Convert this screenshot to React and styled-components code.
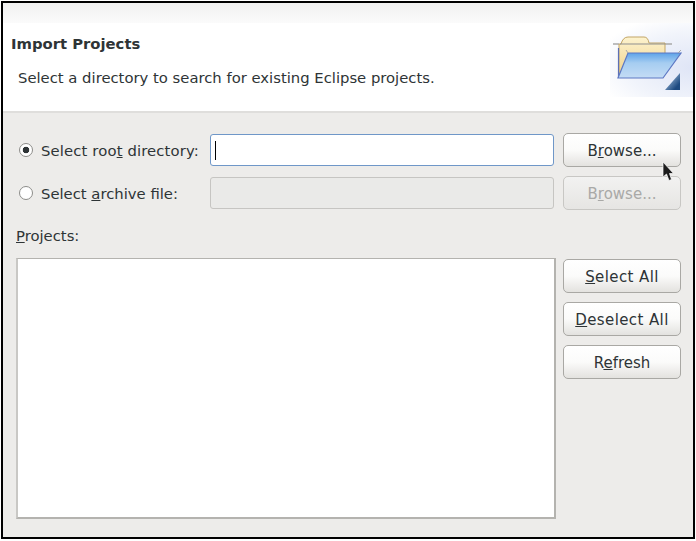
import styled, { createGlobalStyle } from 'styled-components';

const GlobalStyle = createGlobalStyle`
    html, body {
        margin: 0;
        padding: 0;
        background: #fff;
    }
`;

export default function App() {
    return (
        <>
            <GlobalStyle />
            <Frame>
                <TopBand />
                <Banner>
                    <BannerText>
                        <Title>Import Projects</Title>
                        <Subtitle>Select a directory to search for existing Eclipse projects.</Subtitle>
                    </BannerText>
                    <BannerArt>
                        <FolderIcon />
                    </BannerArt>
                </Banner>
                <Body>
                    <SourceGrid>
                        <RadioLabel $spread>
                            <Radio $checked />
                            <span>Select roo<Key>t</Key> directory:</span>
                        </RadioLabel>
                        <PathInput $focused><Caret /></PathInput>
                        <BrowseSlot>
                            <Button>B<Key>r</Key>owse...</Button>
                            <Pointer />
                        </BrowseSlot>
                        <RadioLabel>
                            <Radio />
                            <span>Select <Key>a</Key>rchive file:</span>
                        </RadioLabel>
                        <PathInput $disabled />
                        <Button disabled>B<Key>r</Key>owse...</Button>
                    </SourceGrid>
                    <ProjectsLabel><Key>P</Key>rojects:</ProjectsLabel>
                    <ProjectsRow>
                        <ProjectList />
                        <ButtonColumn>
                            <Button $wide><Key>S</Key>elect All</Button>
                            <Button $wide><Key>D</Key>eselect All</Button>
                            <Button>R<Key>e</Key>fresh</Button>
                        </ButtonColumn>
                    </ProjectsRow>
                </Body>
            </Frame>
        </>
    );
}

function FolderIcon() {
    return (
        <svg width="72" height="56" viewBox="0 0 72 56">
            <defs>
                <linearGradient id="back" x1="0" y1="0" x2="0" y2="1">
                    <stop offset="0" stopColor="#fdf3cf" />
                    <stop offset="1" stopColor="#efcf85" />
                </linearGradient>
                <linearGradient id="front" x1="0" y1="0" x2="0" y2="1">
                    <stop offset="0" stopColor="#5ea3e8" />
                    <stop offset="0.4" stopColor="#a6cdf1" />
                    <stop offset="1" stopColor="#c4dcf5" />
                </linearGradient>
                <linearGradient id="corner" x1="0" y1="0" x2="1" y2="1">
                    <stop offset="0.2" stopColor="#9bb7d6" />
                    <stop offset="0.8" stopColor="#1d4a80" />
                </linearGradient>
            </defs>
            <path d="M1 8 H7 M52 8 H60" stroke="#a9a9a9" strokeWidth="1.5" />
            <path d="M7 42 V8 H9 Q11 1 16 1 H32 Q36 1 37 7 H53 V20 H20 Z" fill="url(#back)" stroke="#c2a566" strokeWidth="1" />
            <path d="M8 8 H53" stroke="#8f8f8f" strokeWidth="1" />
            <path d="M6.5 12 V42" stroke="#5c6fb5" strokeWidth="1.2" />
            <path d="M16 17 H69 L51 42 H6 Z" fill="url(#front)" stroke="#5d78c4" strokeWidth="1.2" />
            <path d="M66 17 L69 14 M16 17 L14 14" stroke="#a8a8a8" strokeWidth="1" />
            <path d="M68 37 V54 H53 Z" fill="url(#corner)" />
        </svg>
    );
}

function Pointer() {
    return (
        <PointerSvg width="14" height="22" viewBox="0 0 14 22">
            <path d="M1 1 V16 L4.5 13 L7 19.5 L9.5 18.5 L7.5 12.5 H11.5 Z" fill="#1c1c1c" stroke="#fff" strokeWidth="0.7" />
        </PointerSvg>
    );
}

const Frame = styled.div`
    box-sizing: border-box;
    width: 694px;
    height: 538px;
    margin: 1px 0 0 1px;
    border: 2px solid #000;
    background-color: #edecea;
    color: #2e3436;
    font-family: "DejaVu Sans", sans-serif;
    font-size: 14.8px;
    overflow: hidden;
    display: flex;
    flex-direction: column;
`;
const TopBand = styled.div`
    height: 20px;
    flex: none;
    background: linear-gradient(#f1f1f0, #fbfbfb);
`;
const Banner = styled.div`
    box-sizing: border-box;
    height: 90px;
    flex: none;
    display: flex;
    justify-content: space-between;
    align-items: flex-start;
    background-color: #fff;
    border-bottom: 2px solid #dfdedc;
`;
const BannerText = styled.div`
    padding: 12px 0 0 8px;
`;
const Title = styled.div`
    font-weight: bold;
    line-height: 17px;
`;
const Subtitle = styled.div`
    margin: 17px 0 0 7px;
    line-height: 17px;
`;
const BannerArt = styled.div`
    box-sizing: border-box;
    width: 83px;
    height: 74px;
    padding: 13px 0 0 2px;
    background: radial-gradient(ellipse at 100% 60%, #dfe5f6 0%, #f1f4fb 55%, #fff 85%);
`;
const Body = styled.div`
    flex: 1;
    padding: 20px 12px 0 13px;
`;
const SourceGrid = styled.div`
    display: grid;
    grid-template-columns: 186px 345px 118px;
    column-gap: 8px;
    row-gap: 9px;
    align-items: center;
`;
const RadioLabel = styled.label`
    display: flex;
    align-items: center;
    gap: 8px;
    padding-left: 3px;
    white-space: nowrap;
    letter-spacing: ${({ $spread }) => ($spread ? '0.14px' : '0')};
`;
const Radio = styled.span`
    box-sizing: border-box;
    flex: none;
    width: 14px;
    height: 14px;
    border-radius: 50%;
    border: 1px solid #8d8d8a;
    background: ${({ $checked }) => ($checked
        ? 'radial-gradient(circle, #2e3436 0 3px, #fff 3.6px)'
        : '#fff')};
`;
const Key = styled.span`
    text-decoration: underline;
`;
const PathInput = styled.div`
    box-sizing: border-box;
    height: 32px;
    margin-right: 1px;
    border-radius: 3px;
    border: 1px solid ${({ $focused }) => ($focused ? '#6f97c8' : '#c6c5c2')};
    background: ${({ $disabled }) => ($disabled ? '#eaeae8' : '#fff')};
    padding: 6px 4px;
    display: flex;
`;
const Caret = styled.span`
    width: 1px;
    height: 19px;
    background: #000;
`;
const BrowseSlot = styled.div`
    position: relative;
    display: flex;
    flex-direction: column;
`;
const PointerSvg = styled.svg`
    position: absolute;
    left: 99px;
    top: 28px;
    z-index: 1;
`;
const Button = styled.button`
    box-sizing: border-box;
    width: 118px;
    height: 34px;
    padding: 2px 0 0;
    border-radius: 5px;
    border: 1px solid ${({ disabled }) => (disabled ? '#c8c7c4' : '#a9a8a4')};
    background: ${({ disabled }) => (disabled
        ? 'linear-gradient(#f2f2f1, #e6e5e3)'
        : 'linear-gradient(#fff 0%, #fbfbfa 50%, #e3e2df 100%)')};
    color: ${({ disabled }) => (disabled ? '#a9a9a7' : '#2e3436')};
    font-family: inherit;
    font-size: 15px;
    letter-spacing: ${({ $wide }) => ($wide ? '0.4px' : '0')};
`;
const ProjectsLabel = styled.div`
    margin-top: 17px;
    line-height: 17px;
`;
const ProjectsRow = styled.div`
    margin-top: 14px;
    display: flex;
    gap: 7px;
`;
const ProjectList = styled.div`
    box-sizing: border-box;
    flex: none;
    width: 540px;
    height: 261px;
    background: #fff;
    border: 1px solid #b4b3af;
    border-width: 1px 2px 2px 2px;
    border-left-color: #c9c8c5;
`;
const ButtonColumn = styled.div`
    display: flex;
    flex-direction: column;
    gap: 9px;
    padding-top: 1px;
`;
